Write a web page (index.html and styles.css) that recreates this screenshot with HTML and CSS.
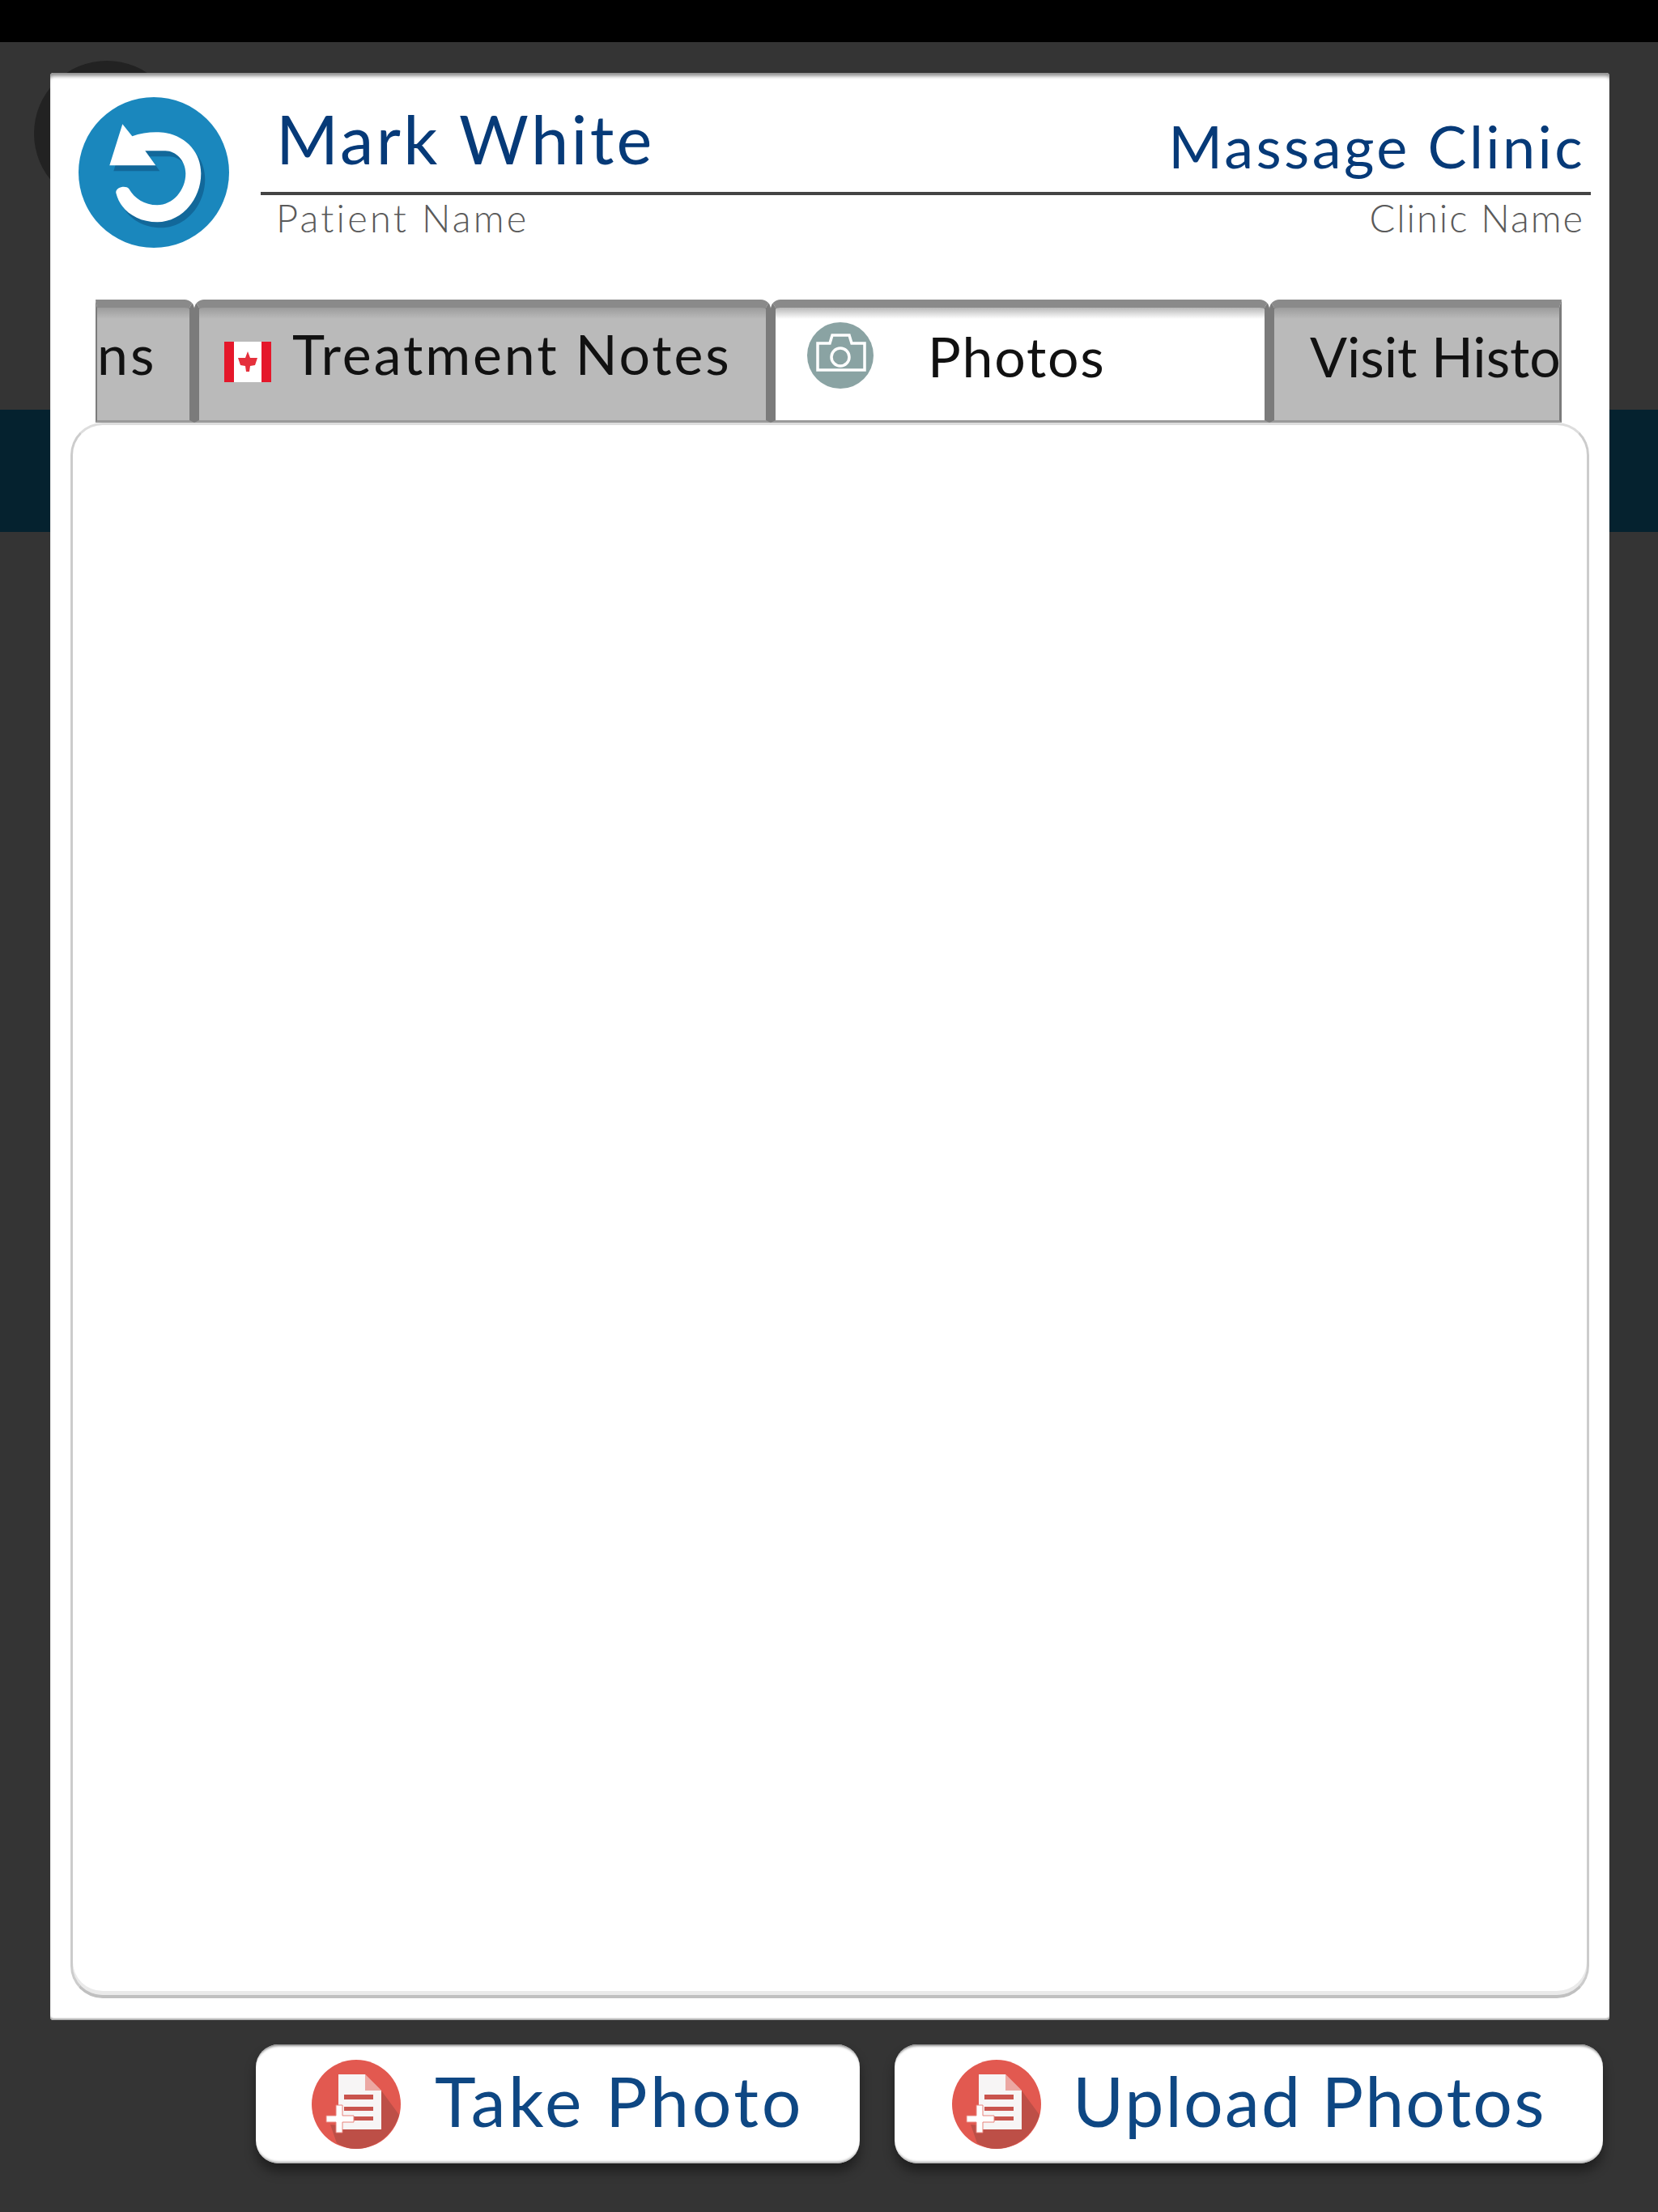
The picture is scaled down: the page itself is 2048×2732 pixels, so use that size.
FILE: index.html
```html
<!DOCTYPE html>
<html lang="en">
<head>
  <meta charset="UTF-8" />
  <title>Patient Photos</title>
  <link rel="stylesheet" href="styles.css">
</head>
<body>

<!-- page behind the dialog -->
<div class="statusbar"></div>
<div class="backdrop">
  <div class="backdrop-circle"></div>
  <div class="backdrop-band"></div>
</div>

<div class="dialog">
  <div class="card">
    <div class="header">
      <svg class="back-icon" viewBox="15.7 8.7 186 186">
        <circle cx="108.7" cy="101.7" r="93" fill="#1a87bd"/>
        <g fill="#12689a" transform="translate(5 7)">
          <path d="M70 42 82 57C95 52 112 51 124 53 150 58 167 78 167 103 167 136 142 163 113 163 87 163 67 148 62 127 61 120 74 117 78 122 85 134 97 142 113 142 132 142 148 124 148 103 148 87 136 75 123 75 115 75 105 75 98 75L111 93H54Z"/>
        </g>
        <path fill="#fff" d="M70 42 82 57C95 52 112 51 124 53 150 58 167 78 167 103 167 136 142 163 113 163 87 163 67 148 62 127 61 120 74 117 78 122 85 134 97 142 113 142 132 142 148 124 148 103 148 87 136 75 123 75 115 75 105 75 98 75L111 93H54Z"/>
      </svg>
      <div class="titles">
        <div class="title-row">
          <span class="patient">Mark White</span>
          <span class="clinic">Massage Clinic</span>
        </div>
        <div class="caption-row">
          <span class="caption caption-patient">Patient Name</span>
          <span class="caption caption-clinic">Clinic Name</span>
        </div>
      </div>
    </div>

    <div class="tabs">
      <div class="tab tab-first"><span class="tab-label tab-label-first">ns</span></div>
      <div class="tab tab-notes">
        <svg class="flag" viewBox="0 0 58 50">
          <rect width="58" height="50" fill="#fff"/>
          <rect width="12" height="50" fill="#e5172a"/>
          <rect x="46" width="12" height="50" fill="#e5172a"/>
          <path fill="#e5303c" d="M29 12 32 20 41 20 38 29 32 30 31 37H27L26 30 20 29 17 20 26 20Z"/>
        </svg>
        <span class="tab-label tab-label-notes">Treatment Notes</span>
      </div>
      <div class="tab tab-active">
        <svg class="camera" viewBox="0 0 82 84">
          <circle cx="41" cy="42" r="41" fill="#8aa3a3"/>
          <path fill="none" stroke="#fff" stroke-width="3.5" d="M13 27H28L31 17H52L55 27H71V60H13Z"/>
          <circle cx="41" cy="44" r="11" fill="none" stroke="#fff" stroke-width="3.5"/>
        </svg>
        <span class="tab-label tab-label-photos">Photos</span>
      </div>
      <div class="tab tab-visit"><span class="tab-label tab-label-visit">Visit Histo</span></div>
    </div>

    <div class="panel"></div>
  </div>

  <div class="actions">
    <div class="action action-take">
      <svg class="doc-icon" viewBox="17 12 110 110">
        <circle cx="72" cy="67" r="55" fill="#e25950"/>
        <path fill="#bd4f47" d="M103 50 125 80C118 105 95 122 72 122 62 122 55 119 48 115L40 92 103 98Z"/>
        <path fill="#f7f5f5" d="M50 30H83L103 50V98H50Z"/>
        <path fill="#e25950" d="M83 30V50H103Z" opacity=".5"/>
        <path fill="#c9544d" d="M57 55H93V61H57ZM57 70H93V75H57ZM57 82H93V87H57Z"/>
        <path fill="#fff" stroke="#e8837c" stroke-width="1" d="M47 68H55V81H69V89H55V102H47V89H35V81H47Z"/>
      </svg>
      <span class="action-label action-label-take">Take Photo</span>
    </div>
    <div class="action action-upload">
      <svg class="doc-icon" viewBox="17 12 110 110">
        <circle cx="72" cy="67" r="55" fill="#e25950"/>
        <path fill="#bd4f47" d="M103 50 125 80C118 105 95 122 72 122 62 122 55 119 48 115L40 92 103 98Z"/>
        <path fill="#f7f5f5" d="M50 30H83L103 50V98H50Z"/>
        <path fill="#e25950" d="M83 30V50H103Z" opacity=".5"/>
        <path fill="#c9544d" d="M57 55H93V61H57ZM57 70H93V75H57ZM57 82H93V87H57Z"/>
        <path fill="#fff" stroke="#e8837c" stroke-width="1" d="M47 68H55V81H69V89H55V102H47V89H35V81H47Z"/>
      </svg>
      <span class="action-label action-label-upload">Upload Photos</span>
    </div>
  </div>
</div>

</body>
</html>
```

FILE: styles.css
```css
body {
  margin: 0; height: 2732px; overflow: hidden;
  background: #343434; position: relative;
  font-family: "Lato", "Open Sans", sans-serif;
}

.statusbar { height: 52px; background: #000; }
.backdrop { position: relative; padding-top: 454px; }
.backdrop-circle {
  position: absolute; left: 42px; top: 23px;
  width: 180px; height: 180px; border-radius: 50%;
  background: #222;
}
.backdrop-band { height: 151px; background: #05222f; }

.dialog { position: absolute; left: 62px; top: 90px; width: 1926px; }

.card {
  height: 2405px; box-sizing: border-box;
  background: #fff; border-radius: 4px;
  box-shadow: inset 0 6px 4px -2px #8f8f8f, inset 0 -3px 2px -1px #aaa;
  overflow: hidden;
}

/* header */
.header { display: flex; height: 280px; box-sizing: border-box; padding: 30px 23px 0 35px; }
.back-icon { width: 186px; height: 186px; flex: none; }
.titles { flex: 1; margin-left: 39px; }
.title-row {
  height: 117px; display: flex; justify-content: space-between; align-items: flex-end;
  border-bottom: 4px solid #444;
  padding: 0 7px 0 19px;
}
.patient { font-size: 83px; line-height: 100px; margin-bottom: 16px; color: #063a78; letter-spacing: 3.3px; }
.clinic { font-size: 72px; line-height: 84px; margin-bottom: 15px; color: #063a78; letter-spacing: 3.4px; }
.caption-row { display: flex; justify-content: space-between; padding: 0 8px 0 19px; }
.caption { font-size: 47px; line-height: 56px; color: #5a5a5a; font-weight: 300; }
.caption-patient { letter-spacing: 3.2px; }
.caption-clinic { letter-spacing: 2px; }

/* tabs */
.tabs { display: flex; height: 152px; margin: 0 59px 0 56px; position: relative; }
.tab {
  box-sizing: border-box; height: 152px; display: flex; align-items: flex-start;
  border: 6px solid #7b7b7b; border-top: 10px solid #8a8a8a; border-bottom: 3px solid #9a9a9a;
  border-radius: 12px 12px 0 0; padding-top: 17px;
  background: linear-gradient(#9c9c9c, #bababa 14px);
  color: #111; overflow: hidden;
}
.tab-first { width: 122px; border-left-width: 2px; border-radius: 0 12px 0 0; }
.tab-notes { width: 712px; padding-left: 31px; }
.tab-active {
  width: 616px; padding-left: 39px;
  background: linear-gradient(#b8b8b8, #fff 14px);
}
.tab-visit { width: 361px; padding-left: 44px; border-right-width: 3px; border-radius: 12px 0 0 0; }
.tab-label { font-size: 68px; line-height: 80px; white-space: nowrap; }
.tab-label-first { letter-spacing: 3px; }
.tab-label-notes { margin-left: 26px; letter-spacing: 2.9px; }
.tab-label-photos { margin: 3px 0 0 67px; letter-spacing: 1.8px; }
.tab-label-visit { margin-top: 3px; letter-spacing: 0; }
.flag { width: 58px; height: 50px; flex: none; margin: 25px 0 0; }
.camera { width: 82px; height: 84px; flex: none; }

/* photo area */
.panel {
  box-sizing: border-box; height: 1946px; margin: 0 25px 27px 25px;
  background: #fff; border-radius: 40px;
  border: 3px solid #ccc; border-top-color: #ddd; border-bottom: 4px solid #c0c0c0;
  box-shadow: inset 0 -5px 0 #eaeaea;
}

/* bottom buttons */
.actions { display: flex; justify-content: flex-end; gap: 43px; margin-top: 30px; padding-right: 8px; }
.action {
  box-sizing: border-box; height: 147px; display: flex; align-items: center;
  padding-left: 69px; gap: 42px;
  background: #fff; border-radius: 28px;
  box-shadow: inset 0 4px 3px -2px #888, inset 0 -4px 3px -2px #aaa, 0 10px 14px rgba(0,0,0,.4);
}
.action-take { width: 746px; }
.action-upload { width: 875px; padding-left: 71px; gap: 39px; }
.doc-icon { width: 110px; height: 110px; flex: none; }
.action-label { font-size: 86px; line-height: 100px; margin-bottom: 10px; color: #0e4783; }
.action-label-take { letter-spacing: 3.7px; }
.action-label-upload { letter-spacing: 2.2px; }
```
